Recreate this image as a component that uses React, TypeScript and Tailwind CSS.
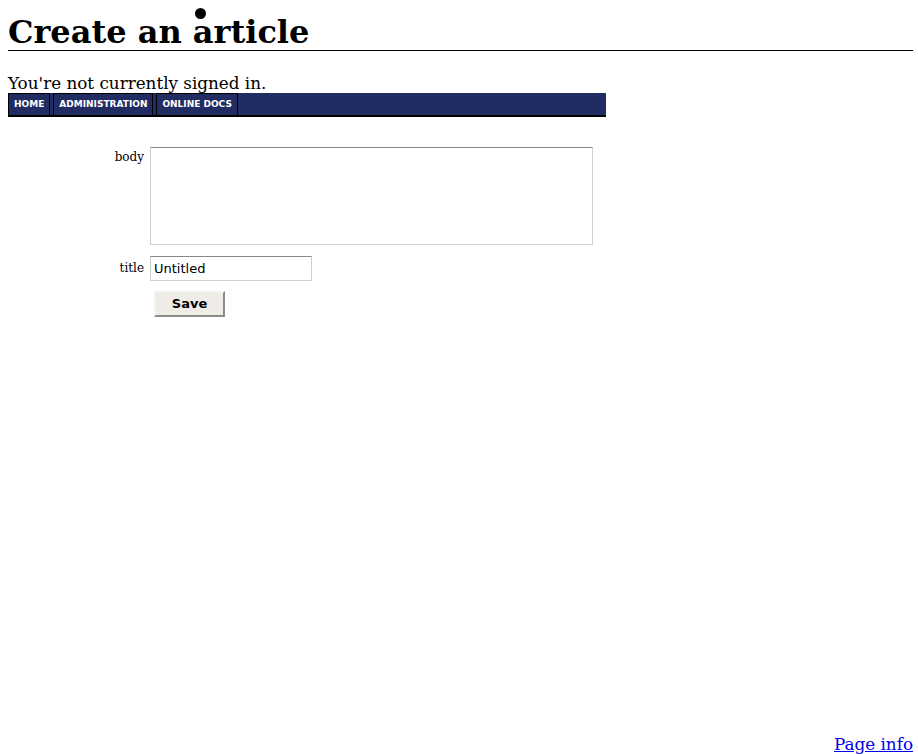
import React from 'react'

const serif = { fontFamily: '"DejaVu Serif", serif' }

function NavTab({ label }: { label: string }) {
  return (
    <a
      href="#"
      className="flex h-full items-center border border-b-0 border-black bg-[#212c62] px-[5px] text-[9px] font-bold uppercase text-white no-underline"
      style={{ fontFamily: '"DejaVu Sans", sans-serif' }}
    >
      {label}
    </a>
  )
}

export default function App() {
  return (
    <div className="relative flex h-[754px] flex-col bg-white pl-2 pr-[5px] pt-2 text-black" style={serif}>
      {/* stray dot over the heading */}
      <span className="absolute left-[195px] top-[8px] h-[11px] w-[11px] rounded-full bg-black"></span>

      <h1 className="mt-[6px] border-b border-black text-[32px] font-bold leading-[36px]">Create an article</h1>

      <p className="mt-[22px] text-[16.8px] leading-[20px]">You're not currently signed in.</p>

      {/* Nav bar */}
      <div className="flex h-[24px] w-[598px] gap-[3px] border-b-2 border-black bg-[#212c62]">
        <NavTab label="Home" />
        <NavTab label="Administration" />
        <NavTab label="Online docs" />
      </div>

      {/* Form */}
      <div className="mt-[30px] grid grid-cols-[136px_auto] items-start gap-x-[6px] gap-y-[11px]">
        <label className="pt-[2px] text-right text-[12px] leading-[16px]">body</label>
        <textarea className="h-[98px] w-[443px] resize-none border border-[#d0d0d0] border-t-[#8a8a8a] bg-white outline-none"></textarea>

        <label className="pt-[4px] text-right text-[12px] leading-[16px]">title</label>
        <input
          defaultValue="Untitled"
          className="h-[25px] w-[162px] border border-[#d0d0d0] border-t-[#8a8a8a] px-[3px] text-[13px] outline-none"
          style={{ fontFamily: '"DejaVu Sans", sans-serif' }}
        />

        <div></div>
        <div className="-mt-[1px] pl-[4px]">
          <button
            className="h-[26px] w-[71px] border-2 border-[#f4f2ee] border-b-[#8c8c8c] border-r-[#8c8c8c] bg-[#efebe7] text-[13px] font-bold"
            style={{ fontFamily: '"DejaVu Sans", sans-serif' }}
          >
            Save
          </button>
        </div>
      </div>

      <div className="mt-auto text-right text-[16.8px] leading-[19px]">
        <a href="#" className="text-[#0000ee] underline">Page info</a>
      </div>
    </div>
  )
}
